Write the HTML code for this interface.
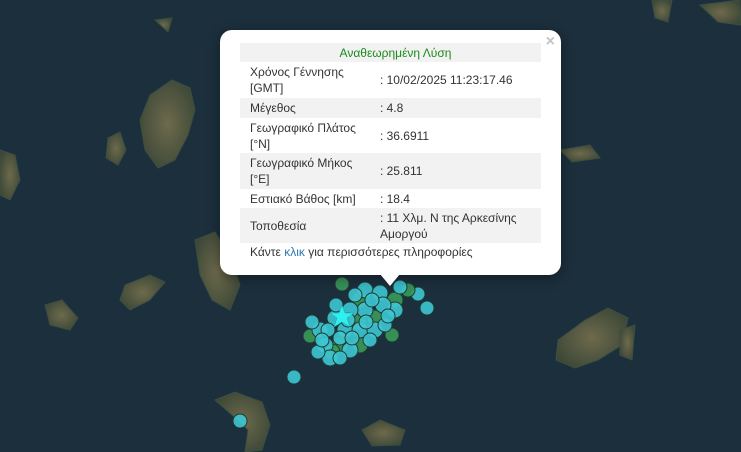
<!DOCTYPE html>
<html><head><meta charset="utf-8"><style>
body{margin:0;width:741px;height:452px;overflow:hidden;background:#1c2f3d;font-family:"Liberation Sans",Arial,sans-serif}
#map{position:absolute;left:0;top:0}
.pop{position:absolute;left:220px;top:30px;width:341px;height:245px;background:#fff;border-radius:12px;box-shadow:0 3px 12px rgba(0,0,0,.4)}
.tip{position:absolute;left:380px;top:274px;width:0;height:0;border-left:10px solid transparent;border-right:10px solid transparent;border-top:12px solid #fff}
.x{position:absolute;right:6px;top:3px;color:#c3c3c3;font:bold 16px "Liberation Sans",sans-serif}
table{position:absolute;left:20px;top:13px;width:301px;border-collapse:collapse;font-size:12px;color:#333}
td{padding:0 0 0 10px;line-height:16px;vertical-align:middle}
tr.g{background:#f2f2f2}
td.v{padding-left:4px}
.h td{text-align:center;color:#1a8a1a;height:19px}
.foot{position:absolute;left:30px;top:215px;font-size:12px;color:#333}
.foot span{color:#2a7ab0}
</style></head><body>
<svg id="map" width="741" height="452">
<defs><radialGradient id="ig" cx="50%" cy="50%" r="60%"><stop offset="0" stop-color="#6e6a4c"/><stop offset="1" stop-color="#3a4636"/></radialGradient></defs>
<g fill="url(#ig)" stroke="#3e4e40" stroke-width="1">
<path d="M150 95 L172 80 L190 88 L195 110 L188 135 L175 160 L158 168 L145 150 L140 120 Z"/>
<path d="M108 138 L120 132 L126 150 L118 165 L106 158 Z"/>
<path d="M0 150 L15 155 L20 180 L10 200 L0 195 Z"/>
<path d="M195 240 L215 232 L230 255 L240 285 L230 310 L212 300 L200 275 Z"/>
<path d="M125 285 L150 275 L165 282 L150 300 L130 310 L120 300 Z"/>
<path d="M45 305 L62 300 L78 318 L70 330 L50 325 Z"/>
<path d="M215 400 L235 392 L262 402 L270 425 L262 450 L245 452 L248 430 L232 415 Z"/>
<path d="M362 430 L380 420 L405 430 L400 445 L372 446 Z"/>
<path d="M558 340 L585 320 L608 308 L628 318 L622 345 L598 360 L575 368 L556 360 Z"/>
<path d="M652 0 L672 0 L668 22 L655 18 Z"/>
<path d="M700 5 L740 0 L741 25 L718 22 Z"/>
<path d="M155 20 L172 18 L168 32 Z"/>
<path d="M560 150 L590 145 L600 158 L572 162 Z"/>
<path d="M620 330 L635 325 L632 360 L620 355 Z"/>
</g>
<g stroke="#1f3b33" stroke-width="1" fill-opacity=".9">
<circle cx="294" cy="377" r="7" fill="#3ec6d3"/>
<circle cx="240" cy="421" r="7" fill="#3ec6d3"/>
<circle cx="418" cy="294" r="7" fill="#3ec6d3"/>
<circle cx="427" cy="308" r="7" fill="#3ec6d3"/>
<circle cx="408" cy="290" r="7" fill="#3a9a5a"/>
<circle cx="342" cy="284" r="7" fill="#3a9a5a"/>
<circle cx="395" cy="300" r="8" fill="#3a9a5a"/>
<circle cx="310" cy="336" r="7" fill="#3a9a5a"/>
<circle cx="392" cy="335" r="7" fill="#3a9a5a"/>
<circle cx="360" cy="300" r="8" fill="#3a9a5a"/>
<circle cx="375" cy="318" r="8" fill="#3a9a5a"/>
<circle cx="340" cy="345" r="8" fill="#3a9a5a"/>
<circle cx="358" cy="322" r="8" fill="#3a9a5a"/>
<circle cx="332" cy="352" r="8" fill="#3a9a5a"/>
<circle cx="360" cy="345" r="8" fill="#3a9a5a"/>
<circle cx="365" cy="290" r="8" fill="#3ec6d3"/>
<circle cx="380" cy="293" r="8" fill="#3ec6d3"/>
<circle cx="395" cy="310" r="8" fill="#3ec6d3"/>
<circle cx="383" cy="305" r="8" fill="#3ec6d3"/>
<circle cx="365" cy="310" r="8" fill="#3ec6d3"/>
<circle cx="350" cy="310" r="8" fill="#3ec6d3"/>
<circle cx="335" cy="318" r="8" fill="#3ec6d3"/>
<circle cx="320" cy="330" r="8" fill="#3ec6d3"/>
<circle cx="325" cy="345" r="8" fill="#3ec6d3"/>
<circle cx="345" cy="330" r="8" fill="#3ec6d3"/>
<circle cx="360" cy="330" r="8" fill="#3ec6d3"/>
<circle cx="375" cy="330" r="8" fill="#3ec6d3"/>
<circle cx="350" cy="350" r="8" fill="#3ec6d3"/>
<circle cx="330" cy="358" r="8" fill="#3ec6d3"/>
<circle cx="318" cy="352" r="7" fill="#3ec6d3"/>
<circle cx="385" cy="325" r="7" fill="#3ec6d3"/>
<circle cx="370" cy="340" r="7" fill="#3ec6d3"/>
<circle cx="400" cy="287" r="7" fill="#3ec6d3"/>
<circle cx="355" cy="295" r="7" fill="#3ec6d3"/>
<circle cx="340" cy="338" r="7" fill="#3ec6d3"/>
<circle cx="312" cy="322" r="7" fill="#3ec6d3"/>
<circle cx="328" cy="330" r="7" fill="#3ec6d3"/>
<circle cx="336" cy="305" r="7" fill="#3ec6d3"/>
<circle cx="372" cy="300" r="7" fill="#3ec6d3"/>
<circle cx="388" cy="316" r="7" fill="#3ec6d3"/>
<circle cx="366" cy="322" r="7" fill="#3ec6d3"/>
<circle cx="352" cy="338" r="7" fill="#3ec6d3"/>
<circle cx="340" cy="358" r="7" fill="#3ec6d3"/>
<circle cx="322" cy="340" r="7" fill="#3ec6d3"/>
<circle cx="348" cy="320" r="7" fill="#3ec6d3"/>
</g>
<polygon points="342,305 345,313 354,313 347,318 350,327 342,322 334,327 337,318 330,313 339,313" fill="#2ef0f0" stroke="#1aa" stroke-width=".5"/>
</svg>
<div class="pop"><div class="x">×</div>
<table>
<tr class="g h"><td colspan="2">Αναθεωρημένη Λύση</td></tr>
<tr style="height:36px"><td>Χρόνος Γέννησης<br>[GMT]</td><td class="v">: 10/02/2025 11:23:17.46</td></tr>
<tr class="g" style="height:20px"><td>Μέγεθος</td><td class="v">: 4.8</td></tr>
<tr style="height:35px"><td>Γεωγραφικό Πλάτος<br>[°N]</td><td class="v">: 36.6911</td></tr>
<tr class="g" style="height:36px"><td>Γεωγραφικό Μήκος<br>[°E]</td><td class="v">: 25.811</td></tr>
<tr style="height:19px"><td>Εστιακό Βάθος [km]</td><td class="v">: 18.4</td></tr>
<tr class="g" style="height:35px"><td>Τοποθεσία</td><td class="v">: 11 Χλμ. N της Αρκεσίνης<br>Αμοργού</td></tr>
</table>
<div class="foot">Κάντε <span>κλικ</span> για περισσότερες πληροφορίες</div>
</div>
<div class="tip"></div>
</body></html>
